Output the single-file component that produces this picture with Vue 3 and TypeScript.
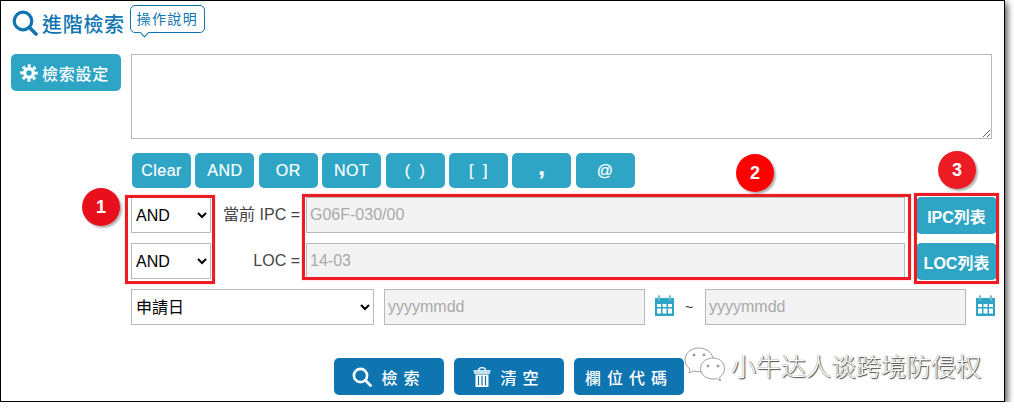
<template>
  <div class="frame">
    <header class="head">
      <svg class="head-icon" viewBox="0 0 26 26" width="26" height="26">
        <circle cx="11" cy="11" r="8.8" fill="none" stroke="#0f75b0" stroke-width="3.2" />
        <path d="M17.5 17.5 L24 24" stroke="#0f75b0" stroke-width="3.6" stroke-linecap="round" />
      </svg>
      <h1 class="title">進階檢索</h1>
      <span class="help">操作說明</span>
    </header>

    <div class="main">
      <button class="btn settings">
        <svg viewBox="0 0 20 20" width="18" height="18">
          <circle cx="10" cy="10" r="4.9" fill="none" stroke="#fff" stroke-width="3.8" />
          <circle cx="10" cy="10" r="8" fill="none" stroke="#fff" stroke-width="3.4" stroke-dasharray="3.3 2.98" stroke-dashoffset="1.6" />
        </svg>
        檢索設定
      </button>

      <div class="form">
        <textarea class="query"></textarea>

        <div class="ops">
          <button v-for="op in operators" :key="op" class="btn op" :class="{ comma: op === ',' }">{{ op }}</button>
        </div>

        <div class="rules">
          <div v-for="rule in rules" :key="rule.label" class="rule">
            <select class="logic"><option>AND</option><option>OR</option><option>NOT</option></select>
            <label class="rule-label">{{ rule.label }}</label>
            <input class="field rule-input" :value="rule.value" readonly />
            <button class="btn list">{{ rule.button }}</button>
          </div>
        </div>

        <div class="dates">
          <select class="date-type"><option>申請日</option></select>
          <template v-for="side in 2" :key="side">
            <span v-if="side === 2" class="tilde">~</span>
            <input class="field date-input" placeholder="yyyymmdd" readonly />
            <svg class="cal" viewBox="0 0 19 21" width="19" height="21">
              <path d="M0 3h19v18H0z" fill="#2ea5c4" />
              <path d="M4 0.5v5M15 0.5v5" stroke="#2ea5c4" stroke-width="2" />
              <path d="M4 .5v5M15 .5v5" stroke="#fff" stroke-width=".6" />
              <g fill="#fff">
                <rect x="2" y="9" width="4" height="3" /><rect x="7.5" y="9" width="4" height="3" /><rect x="13" y="9" width="4" height="3" />
                <rect x="2" y="13.5" width="4" height="5" /><rect x="7.5" y="13.5" width="4" height="5" /><rect x="13" y="13.5" width="4" height="5" />
              </g>
            </svg>
          </template>
        </div>

        <div class="actions">
          <button class="btn action">
            <svg viewBox="0 0 20 20" width="20" height="20">
              <circle cx="8.5" cy="8.5" r="6.6" fill="none" stroke="#fff" stroke-width="2.6" />
              <path d="M13.5 13.5 L18.5 18.5" stroke="#fff" stroke-width="2.8" stroke-linecap="round" />
            </svg>
            <span class="spaced">檢索</span>
          </button>
          <button class="btn action">
            <svg viewBox="0 0 18 20" width="18" height="20">
              <path d="M5.5 3.5C5.5 1.5 7 .7 9 .7s3.5 .8 3.5 2.800M.5 4h17M1 6h16" fill="none" stroke="#fff" stroke-width="1.3" />
              <path d="M2.5 7.5h13V20h-13z" fill="#fff" />
              <path d="M5.5 9v9.5M9 9v9.500M12.500 9v9.500" stroke="#0f75b0" stroke-width="1.2" />
            </svg>
            <span class="spaced">清空</span>
          </button>
          <button class="btn action"><span class="spaced">欄位代碼</span></button>
        </div>
      </div>
    </div>

    <!-- annotations drawn over the form -->
    <div class="mark box-1"></div>
    <div class="mark box-2"></div>
    <div class="mark box-3"></div>
    <span class="badge badge-1">1</span>
    <span class="badge badge-2">2</span>
    <span class="badge badge-3">3</span>

    <div class="watermark">
      <svg viewBox="0 0 42 36" width="42" height="36">
        <path d="M15 1C7 1 1 6 1 13c0 4 2 7 5 9l-1 4 5-2c2 .6 3.5 .8 5 .8 8 0 14-5.3 14-11.800S23 1 15 1z" fill="#fff" stroke="#777" stroke-width=".7" />
        <path d="M29 11c-7 0-12.5 4.5-12.5 10.5S22 32 29 32c1.500 0 2.500-.2 3.500-.5l4 2.500-1-3.700c3-2 5-5 5-8.300C40.500 15.500 36 11 29 11z" fill="#fff" stroke="#777" stroke-width=".7" />
        <g fill="none" stroke="#666" stroke-width=".8">
          <circle cx="10" cy="8" r="1" /><circle cx="20" cy="8" r="1" /><circle cx="24" cy="19" r="1" /><circle cx="34" cy="19" r="1" />
        </g>
      </svg>
      <span>小牛达人谈跨境防侵权</span>
    </div>
  </div>
</template>

<script setup lang="ts">
interface Rule {
  label: string;
  value: string;
  button: string;
}

const operators: string[] = ['Clear', 'AND', 'OR', 'NOT', '( )', '[ ]', ',', '@'];

const rules: Rule[] = [
  { label: '當前 IPC =', value: 'G06F-030/00', button: 'IPC列表' },
  { label: 'LOC =', value: '14-03', button: 'LOC列表' },
];
</script>

<style scoped>
.frame {
  position: relative;
  box-sizing: border-box;
  width: 1005px;
  height: 402px;
  padding: 4px 0 0 10px;
  background: #fff;
  border: 1px solid #000;
  box-shadow: 2px 3px 7px rgba(0, 0, 0, 0.75);
  font-family: "Liberation Sans", "Noto Sans CJK TC", sans-serif;
}

.head {
  display: flex;
  align-items: flex-start;
  height: 49px;
}

.head-icon {
  margin: 5px 4px 0 1px;
}

.title {
  margin: 5px 0 0;
  font-size: 20px;
  line-height: 30px;
  font-weight: 500;
  letter-spacing: 0.7px;
  color: #0f75b0;
  white-space: nowrap;
}

.help {
  position: relative;
  box-sizing: border-box;
  width: 75px;
  height: 28px;
  margin-left: 5px;
  border: 1px solid #0f75b0;
  border-radius: 5px;
  font-size: 14px;
  line-height: 26px;
  letter-spacing: 1.4px;
  text-align: center;
  color: #0f75b0;
}

.help::after {
  content: "";
  position: absolute;
  left: 10px;
  bottom: -4px;
  width: 6px;
  height: 6px;
  background: #fff;
  border-right: 1px solid #0f75b0;
  border-bottom: 1px solid #0f75b0;
  transform: rotate(45deg);
}

.main {
  display: grid;
  grid-template-columns: 110px 861px;
  column-gap: 10px;
  align-items: start;
}

.btn {
  display: flex;
  align-items: center;
  justify-content: center;
  padding: 0;
  border: 0;
  border-radius: 5px;
  background: #2ea5c4;
  color: #fff;
  font-family: inherit;
}

.settings {
  gap: 4px;
  height: 37px;
  padding-right: 3px;
  font-size: 16px;
  font-weight: 500;
  letter-spacing: 0.7px;
}

.form {
  display: flex;
  flex-direction: column;
}

.query {
  display: block;
  box-sizing: border-box;
  width: 861px;
  height: 85px;
  margin: 0;
  border: 1px solid #b8b8b8;
}

.ops {
  display: flex;
  gap: 4.4px;
  margin: 14px 0 0 1px;
}

.op {
  width: 59px;
  height: 35px;
  font-size: 16px;
  font-weight: 500;
  letter-spacing: 0.5px;
  word-spacing: 4px;
  -webkit-text-stroke: 0.2px #fff;
}

.comma {
  padding-bottom: 8px;
  font-size: 24px;
  font-weight: 700;
}

.rules {
  display: flex;
  flex-direction: column;
  gap: 9px;
  margin-top: 9px;
  width: 870px;
}

.rule {
  display: flex;
  align-items: flex-start;
  height: 37px;
}

.logic,
.date-type {
  box-sizing: border-box;
  height: 36px;
  border: 1px solid #b8b8b8;
  border-radius: 0;
  background: #fff;
  color: #000;
  font-family: "Liberation Sans", "Noto Sans CJK TC", sans-serif;
  font-size: 16px;
}

.logic {
  flex: none;
  width: 80px;
}

.rule-label {
  flex: none;
  width: 89px;
  padding-right: 6px;
  font-size: 16px;
  line-height: 36px;
  text-align: right;
  color: #444;
  white-space: nowrap;
}

.field {
  box-sizing: border-box;
  height: 36px;
  margin: 0;
  padding: 0 3px;
  border: 1px solid #b8b8b8;
  background: #f3f3f3;
  color: #aaa;
  font-family: inherit;
  font-size: 16px;
  outline: none;
}

.field::placeholder {
  color: #aaa;
  opacity: 1;
}

.rule-input {
  flex: none;
  width: 599px;
}

.list {
  flex: none;
  width: 81px;
  height: 37px;
  margin-left: 11px;
  font-size: 16px;
  font-weight: 700;
}

.dates {
  display: flex;
  align-items: flex-start;
  gap: 10px;
  margin-top: 9px;
  width: 880px;
}

.date-type {
  width: 243px;
}

.date-input {
  width: 261px;
}

.cal {
  flex: none;
  margin-top: 6px;
}

.tilde {
  width: 12px;
  margin-left: -1px;
  font-size: 14px;
  line-height: 36px;
  text-align: center;
  color: #333;
}

.actions {
  display: flex;
  gap: 10px;
  margin-top: 33px;
  margin-left: 203px;
}

.action {
  gap: 9px;
  width: 110px;
  height: 37px;
  background: #0f75b0;
  font-size: 16px;
  font-weight: 500;
}

.spaced {
  letter-spacing: 6px;
}

.mark {
  position: absolute;
  box-sizing: border-box;
  border: 3px solid #ed1c24;
  box-shadow: 0 0 1px rgba(237, 28, 36, 0.6);
}

.box-1 {
  left: 124px;
  top: 194px;
  width: 90px;
  height: 89px;
}

.box-2 {
  left: 301px;
  top: 193px;
  width: 609px;
  height: 86px;
}

.box-3 {
  left: 913px;
  top: 192px;
  width: 85px;
  height: 91px;
}

.badge {
  position: absolute;
  width: 38px;
  height: 38px;
  border-radius: 50%;
  background: #f00;
  color: #fff;
  font-size: 18px;
  font-weight: 700;
  line-height: 38px;
  text-align: center;
  box-shadow: 2px 2px 2px rgba(0, 0, 0, 0.3);
}

.badge-1 {
  left: 81px;
  top: 187px;
  background: #e8101c;
}

.badge-2 {
  left: 735px;
  top: 153px;
}

.badge-3 {
  left: 937px;
  top: 150px;
  background: #ed1c24;
}

.watermark {
  position: absolute;
  left: 683px;
  top: 346px;
  display: flex;
  align-items: center;
  gap: 5px;
  font-family: "Noto Sans CJK SC", sans-serif;
  font-size: 25px;
  font-weight: 300;
  line-height: 36px;
  color: #fff;
  text-shadow: 1px 1px 1px #444, 0 0 1px #555;
  white-space: nowrap;
}
</style>

<style>
html,
body {
  margin: 0;
  background: #fff;
}
</style>
